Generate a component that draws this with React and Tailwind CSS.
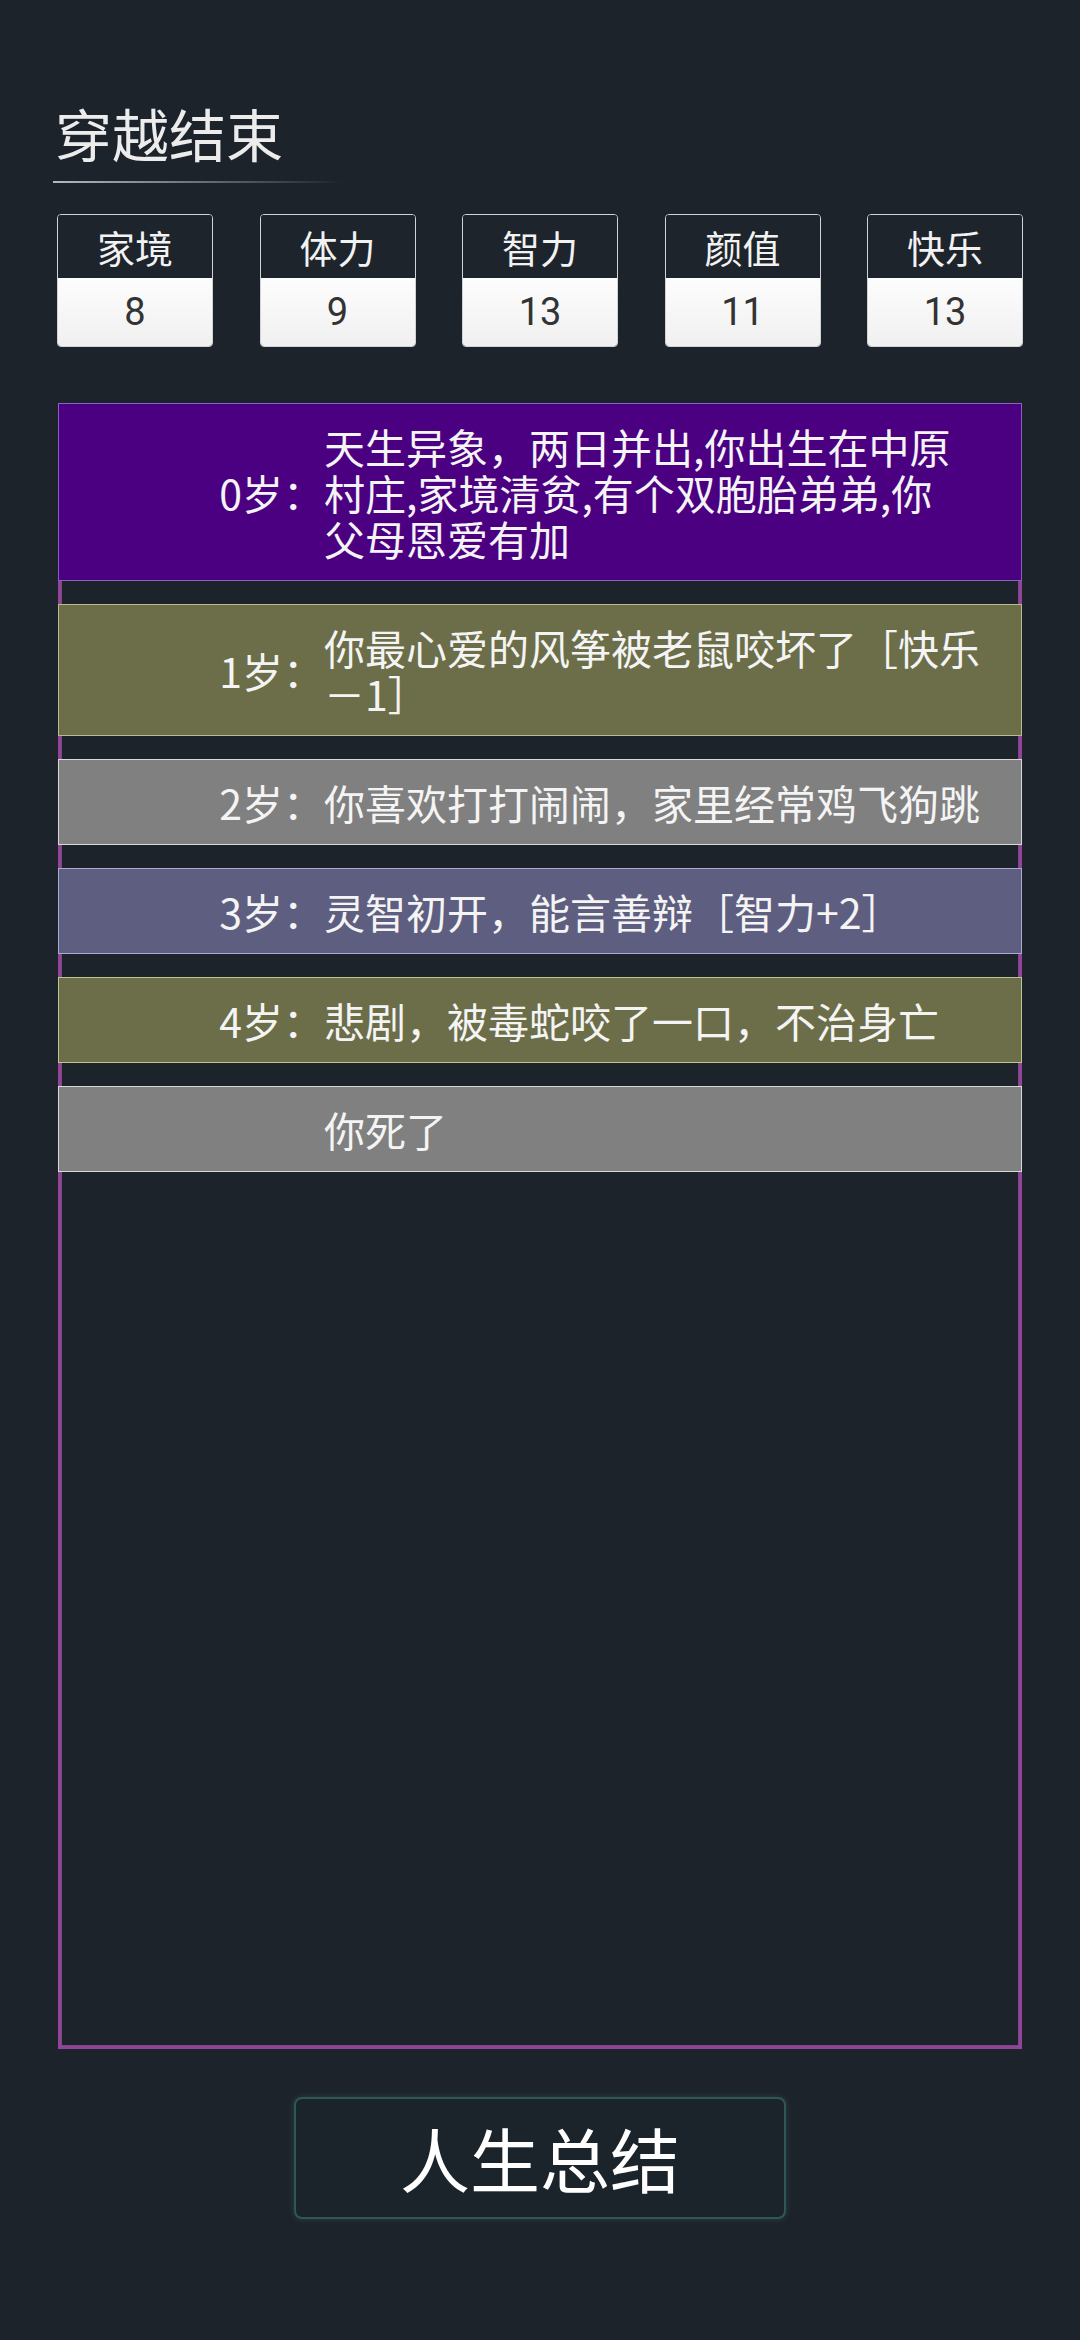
import { Fragment } from 'react'

const stats = [
  { label: '家境', value: 8 },
  { label: '体力', value: 9 },
  { label: '智力', value: 13 },
  { label: '颜值', value: 11 },
  { label: '快乐', value: 13 },
]

const events = [
  {
    age: '0岁：',
    lines: ['天生异象，两日并出,你出生在中原', '村庄,家境清贫,有个双胞胎弟弟,你', '父母恩爱有加'],
    tone: 'border-[#8a5fc0] bg-[#4b0082]',
  },
  {
    age: '1岁：',
    lines: ['你最心爱的风筝被老鼠咬坏了［快乐', '－1］'],
    tone: 'border-[#b9bd8e] bg-[#6b6e48]',
  },
  {
    age: '2岁：',
    lines: ['你喜欢打打闹闹，家里经常鸡飞狗跳'],
    tone: 'border-[#d8d8d8] bg-[#808080]',
  },
  {
    age: '3岁：',
    lines: ['灵智初开，能言善辩［智力+2］'],
    tone: 'border-[#a9abd0] bg-[#5e5f80]',
  },
  {
    age: '4岁：',
    lines: ['悲剧，被毒蛇咬了一口，不治身亡'],
    tone: 'border-[#bcc68e] bg-[#6b6e48]',
  },
  {
    age: '',
    lines: ['你死了'],
    tone: 'border-[#d8d8d8] bg-[#808080]',
  },
]

const cjk = "font-['Noto_Sans_CJK_SC','Noto_Sans',sans-serif]"

function StatBox({ label, value }) {
  return (
    <div className="flex h-[133px] w-[156px] flex-col overflow-hidden rounded-[4px] border border-[#cfd2d6]">
      <div className={`flex h-[63px] items-center justify-center bg-[#1d242c] text-[38px] leading-none text-[#f2f2f2] ${cjk}`}>
        {label}
      </div>
      <div className="flex flex-1 items-center justify-center bg-gradient-to-b from-[#fdfdfd] to-[#f0f0f0] font-['Roboto',sans-serif] text-[38px] leading-none text-[#333]">
        {value}
      </div>
    </div>
  )
}

function EventRow({ age, lines, tone }) {
  return (
    <div className={`-mx-[3px] flex items-center border py-[19px] ${tone}`}>
      <div className="w-[265px] shrink-0 text-right leading-[46px] text-[#f4f4f4]">{age}</div>
      <p className="whitespace-nowrap leading-[46px] text-[#f4f4f4]">
        {lines.map((line, i) => (
          <Fragment key={line}>
            {i > 0 && <br />}
            {line}
          </Fragment>
        ))}
      </p>
    </div>
  )
}

export default function App() {
  return (
    <div className={`min-h-[2340px] w-[1080px] bg-[#1d232b] ${cjk}`}>
      <div className="pl-[55px] pt-[104px]">
        <h1 className="text-[57px] font-normal leading-none text-[#ececec]">穿越结束</h1>
        <div className="mt-[20px] -ml-[2px] h-[2px] w-[290px] bg-gradient-to-r from-[#b5b9bd] via-[#6b7178] to-transparent" />
      </div>

      <div className="mx-[57px] mt-[31px] flex justify-between">
        {stats.map((s) => (
          <StatBox key={s.label} {...s} />
        ))}
      </div>

      <div className="mx-[58px] mt-[56px] h-[1646px] border-[3px] border-[#96419c] shadow-[inset_0_0_0_1px_rgba(200,120,210,0.5)]">
        <div className="-mt-[3px] flex flex-col gap-[23px] text-[41px]">
          {events.map((e, i) => (
            <EventRow key={i} {...e} />
          ))}
        </div>
      </div>

      <div className="mt-[48px] flex justify-center">
        <button
          type="button"
          className="flex h-[122px] w-[492px] items-center justify-center rounded-[8px] border-2 border-[#2f5757] bg-[#1b242a] text-[70px] leading-none text-white shadow-[0_0_6px_rgba(60,120,120,0.35)]"
        >
          人生总结
        </button>
      </div>
    </div>
  )
}
